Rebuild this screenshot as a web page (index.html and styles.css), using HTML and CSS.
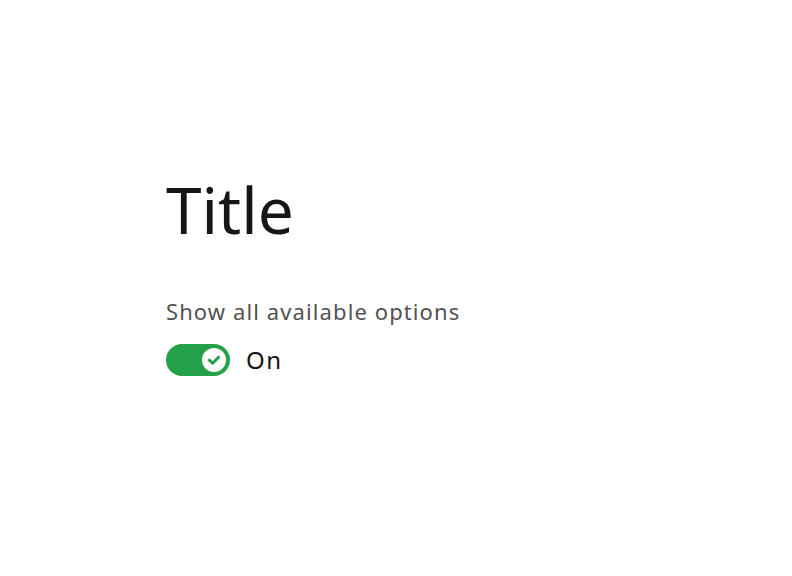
FILE: index.html
```html
<!DOCTYPE html>
<html lang="en">
<head>
    <meta charset="UTF-8">
    <meta name="viewport" content="width=device-width, initial-scale=1.0">
    <title>Title</title>
    <link rel="stylesheet" href="styles.css">
</head>
<body>
    <div class="container">
        <h1 class="title">Title</h1>

        <div class="toggle-field">
            <label class="toggle-label" for="showAll">Show all available options</label>
            <div class="toggle-row">
                <button class="toggle is-on" id="showAll" role="switch" aria-checked="true">
                    <span class="toggle-knob">
                        <svg viewBox="0 0 24 24" width="24" height="24" aria-hidden="true">
                            <circle cx="12" cy="12" r="12" fill="#fff"/>
                            <path d="M7.4 12.2 L10.6 15.2 L16.6 9.2" fill="none" stroke="#24a148" stroke-width="3" stroke-linecap="round" stroke-linejoin="round"/>
                        </svg>
                    </span>
                </button>
                <span class="toggle-state">On</span>
            </div>
        </div>
    </div>
</body>
</html>
```

FILE: styles.css
```css
:root {
    --text-primary: #161616;
    --text-secondary: #525252;
    --support-success: #24a148;
}

body {
    font-family: 'Noto Sans', 'Liberation Sans', sans-serif;
    margin: 0;
    padding: 0;
    background-color: #fff;
    color: var(--text-primary);
}

.container {
    padding: 170px 166px 0;
}

.title {
    font-size: 64px;
    font-weight: 400;
    line-height: 80px;
    margin: 0 0 47px;
}

.toggle-field {
    display: flex;
    flex-direction: column;
    gap: 19px;
}

.toggle-label {
    font-size: 22px;
    line-height: 28px;
    color: var(--text-secondary);
    letter-spacing: 1.1px;
}

.toggle-row {
    display: flex;
    align-items: center;
    gap: 16px;
}

.toggle {
    width: 64px;
    height: 32px;
    border: none;
    border-radius: 16px;
    padding: 0 4px;
    background-color: var(--support-success);
    display: flex;
    align-items: center;
    justify-content: flex-end;
    cursor: pointer;
}

.toggle-knob {
    width: 24px;
    height: 24px;
    display: block;
}

.toggle-knob svg {
    display: block;
}

.toggle-state {
    font-size: 24px;
    line-height: 32px;
    letter-spacing: 1.5px;
}
```
